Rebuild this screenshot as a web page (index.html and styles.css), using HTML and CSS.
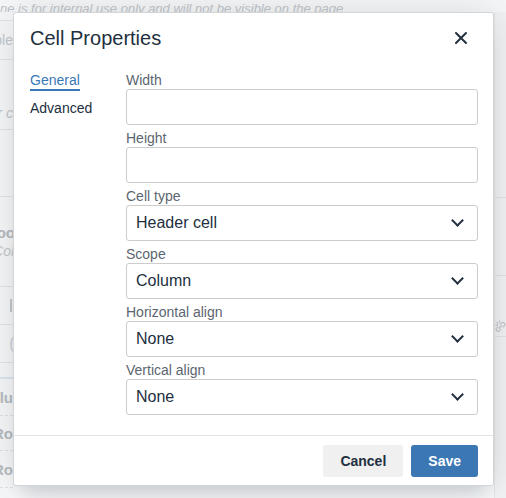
FILE: index.html
```html
<!DOCTYPE html>
<html lang="en">

<head>
    <meta charset="UTF-8">
    <title>Cell Properties</title>

    <link rel="stylesheet" href="styles.css">

</head>

<body>
    <!-- editor page that sits behind the modal -->
    <div class="page">
        <p class="note">ne is for internal use only and will not be visible on the page</p>
        <div class="strips">
            <div class="left">
                <div class="cell" style="height: 8px"></div>
                <div class="cell" style="height: 38px"><span>Table</span></div>
                <div class="cell low" style="height: 70px"><em>Your c</em></div>
                <div class="cell" style="height: 66px"></div>
                <div class="cell stack" style="height: 89px"><b>Choo</b><em>Column b</em></div>
                <div class="cell" style="height: 37px"><span class="bar"></span></div>
                <div class="cell" style="height: 37px"><span class="paren">(</span></div>
                <div class="cell blue" style="height: 14px"></div>
                <div class="cell dashed" style="height: 36px"><b>Colu</b></div>
                <div class="cell dashed" style="height: 34px"><b>Ro</b></div>
                <div class="cell dashed" style="height: 36px"><b>Ro</b></div>
            </div>
            <div class="right">
                <div class="rcell" style="height: 185px"></div>
                <div class="rcell" style="height: 77px"></div>
                <div class="rcell link" style="height: 61px">
                    <svg width="12" height="16" viewBox="0 0 12 16">
                        <path d="M3 9 L1.5 10.5 a2.2 2.2 0 0 0 3 3 L6 12 M6 6 L7.5 4.5 a2.2 2.2 0 0 1 3 3 L9 9 M4.5 10.5 L7.5 7.5" fill="none" stroke="#c3c7cb" stroke-width="1.3" stroke-linecap="round" />
                        <path d="M2 4 L3.5 5.5 M5 2 L5.2 4 M1 7 L3 7" stroke="#c3c7cb" stroke-width="1.2" stroke-linecap="round" />
                    </svg>
                </div>
            </div>
        </div>
    </div>

    <section class="dialog">
        <header class="dialog-header">
            <h1>Cell Properties</h1>
            <button class="close" aria-label="Close">
                <svg width="14" height="14" viewBox="0 0 14 14">
                    <path d="M2 2 L12 12 M12 2 L2 12" stroke="#222f3e" stroke-width="2" stroke-linecap="round" />
                </svg>
            </button>
        </header>

        <div class="dialog-body">
            <nav class="tabs">
                <div class="tab valgt">General</div>
                <div class="tab">Advanced</div>
            </nav>

            <div class="form">
                <div class="field">
                    <label>Width</label>
                    <div class="input"></div>
                </div>
                <div class="field">
                    <label>Height</label>
                    <div class="input"></div>
                </div>
                <div class="field">
                    <label>Cell type</label>
                    <div class="input select">Header cell<span class="chevron"></span></div>
                </div>
                <div class="field">
                    <label>Scope</label>
                    <div class="input select">Column<span class="chevron"></span></div>
                </div>
                <div class="field">
                    <label>Horizontal align</label>
                    <div class="input select">None<span class="chevron"></span></div>
                </div>
                <div class="field">
                    <label>Vertical align</label>
                    <div class="input select">None<span class="chevron"></span></div>
                </div>
            </div>
        </div>

        <footer class="dialog-footer">
            <button class="btn secondary">Cancel</button>
            <button class="btn primary">Save</button>
        </footer>
    </section>
</body>

</html>
```

FILE: styles.css
```css
body {
    margin: 0;
    width: 506px;
    height: 498px;
    overflow: hidden;
    background: #f7f8f9;
    font-family: "Liberation Sans", Arial, sans-serif;
    color: #222f3e;
}

/* faded page behind the dialog */
.note {
    margin: 0;
    height: 12px;
    overflow: hidden;
    font-size: 13px;
    line-height: 18px;
    font-style: italic;
    color: #c2c6ca;
    white-space: nowrap;
}

.strips {
    display: flex;
    justify-content: space-between;
}

.left {
    width: 13px;
    overflow: hidden;
}

.cell {
    display: flex;
    justify-content: flex-end;
    align-items: center;
    border-bottom: 1px solid #e3e5e7;
    white-space: nowrap;
    font-size: 14px;
    color: #c4c8cc;
}

.cell.low {
    align-items: flex-end;
    box-sizing: border-box;
    padding-bottom: 8px;
}

.cell b {
    color: #b6bbc0;
    font-size: 15px;
}

.cell.stack {
    flex-direction: column;
    align-items: flex-end;
    justify-content: center;
    gap: 2px;
}

.cell.stack b {
    margin-right: -2px;
}

.cell.stack em {
    margin-right: -40px;
}

.cell.blue {
    border-bottom: 2px solid #dde6f0;
}

.cell.dashed {
    border-bottom: 1px dashed #dfe1e3;
}

.bar {
    width: 2px;
    height: 13px;
    background: #c4c8cc;
    margin-right: 1px;
}

.paren {
    margin-right: -2px;
    font-size: 18px;
    color: #d2d5d8;
}

.right {
    width: 11px;
    height: 486px;
    background: #f2f3f4;
    border-left: 1px solid #e6e7e8;
}

.rcell {
    border-bottom: 1px solid #e3e5e7;
}

.rcell.link {
    display: flex;
    align-items: flex-end;
    padding-bottom: 2px;
    box-sizing: border-box;
}

/* the dialog */
.dialog {
    position: absolute;
    left: 13px;
    top: 12px;
    width: 481px;
    height: 474px;
    box-sizing: border-box;
    background: #ffffff;
    border: 1px solid #d3d5d7;
    border-radius: 3px;
    box-shadow: 0 16px 16px -10px rgba(34, 47, 62, 0.15), 0 0 40px 1px rgba(34, 47, 62, 0.15);
    display: flex;
    flex-direction: column;
}

.dialog-header {
    display: flex;
    align-items: center;
    justify-content: space-between;
    padding: 12px 15px 0 16px;
    height: 26px;
}

h1 {
    margin: 0;
    font-size: 20px;
    font-weight: normal;
    line-height: 26px;
}

.close {
    border: none;
    background: none;
    padding: 0;
    width: 14px;
    height: 14px;
    margin-right: 10px;
    display: flex;
}

.dialog-body {
    flex: 1;
    display: flex;
    padding: 20px 15px 0 16px;
    border-bottom: 1px solid #e3e4e5;
}

.tabs {
    width: 96px;
    flex-shrink: 0;
    display: flex;
    flex-direction: column;
    gap: 8px;
    font-size: 14px;
}

.tab {
    line-height: 18px;
    align-self: flex-start;
    color: #222f3e;
    border-bottom: 2px solid transparent;
}

.tab.valgt {
    color: #3a79b7;
    border-bottom-color: #3a79b7;
}

.form {
    flex: 1;
    display: flex;
    flex-direction: column;
    gap: 4px;
}

.field label {
    display: block;
    font-size: 14px;
    line-height: 18px;
    color: #5c6670;
}

.input {
    box-sizing: border-box;
    height: 36px;
    border: 1px solid #cccccc;
    border-radius: 3px;
    background: #ffffff;
    font-size: 16px;
    line-height: 34px;
    padding: 0 9px;
    display: flex;
    align-items: center;
    justify-content: space-between;
}

.chevron {
    width: 7px;
    height: 7px;
    border-right: 2px solid #222f3e;
    border-bottom: 2px solid #222f3e;
    transform: rotate(45deg);
    margin: -5px 6px 0 0;
}

.dialog-footer {
    display: flex;
    justify-content: flex-end;
    gap: 8px;
    padding: 9px 15px 8px 16px;
}

.btn {
    height: 32px;
    border: none;
    border-radius: 3px;
    padding: 0 17px;
    font-family: "Liberation Sans", Arial, sans-serif;
    font-size: 14px;
    font-weight: bold;
}

.secondary {
    background: #f0f0f0;
    color: #222f3e;
}

.primary {
    background: #3b77b3;
    color: #ffffff;
}
```
